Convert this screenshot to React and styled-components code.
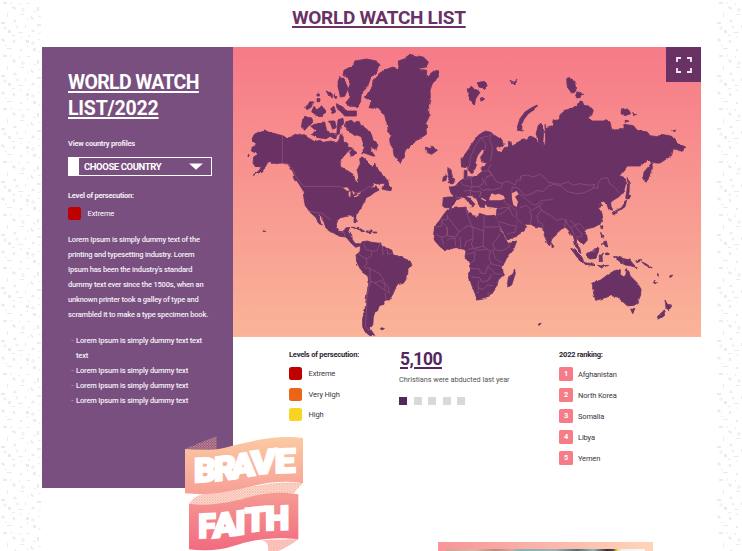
import React from "react";
import styled, { createGlobalStyle } from "styled-components";

const Global = createGlobalStyle`
  *, *::before, *::after { box-sizing: border-box; }
  body { margin: 0; background: #fff; overflow: hidden; }
  h1, h2, h3, p, ul, ol { margin: 0; padding: 0; list-style: none; }
`;

const Page = styled.div`
  position: relative;
  display: grid;
  grid-template-columns: 42px 674px 26px;
  width: 742px;
  height: 551px;
  overflow: hidden;
  font-family: Roboto, "Liberation Sans", sans-serif;
  color: #3b3540;
`;
const Texture = styled.svg`
  display: block;
  width: 100%;
  height: 551px;
`;
const Content = styled.main`
  display: flex;
  flex-direction: column;
`;
const PageTitle = styled.h1`
  width: 674px;
  height: 47px;
  padding: 6px 0 0 250px;
  font-size: 19px;
  line-height: 24px;
  font-weight: 700;
  letter-spacing: -0.3px;
  white-space: nowrap;
  color: #6a3165;
  text-decoration: underline;
  text-decoration-thickness: 1.5px;
  text-underline-offset: 2px;
`;
const WatchList = styled.section`
  display: grid;
  grid-template-columns: 191px 468px;
  height: 441px;
`;
const Sidebar = styled.aside`
  padding: 23px 0 0 26px;
  background: #784f7f;
  color: #fff;
`;
const SideTitle = styled.h2`
  font-size: 19.5px;
  line-height: 26px;
  font-weight: 700;
  letter-spacing: -0.65px;
  white-space: nowrap;
  text-decoration: underline;
  text-decoration-thickness: 2px;
  text-underline-offset: 2px;
  & > span { letter-spacing: -0.2px; }
`;
const Label = styled.h3`
  margin-top: ${(p) => p.$top || 0}px;
  font-size: 7.5px;
  line-height: 10px;
  font-weight: 700;
  letter-spacing: ${(p) => p.$track || -0.22}px;
  white-space: nowrap;
  color: ${(p) => p.$color || "#f4edf5"};
`;
const Select = styled.button`
  display: flex;
  align-items: center;
  justify-content: space-between;
  width: 144px;
  height: 19px;
  margin-top: 8px;
  padding: 0 8px 0 5px;
  border: 1px solid #fff;
  border-left: 11px solid #fff;
  background: transparent;
  color: #fff;
  font: 700 9.5px/16px Roboto, sans-serif;
  letter-spacing: -0.4px;
  white-space: nowrap;
`;
const Caret = styled.svg`
  width: 14px;
  height: 7px;
`;
const LevelRow = styled.li`
  display: flex;
  align-items: center;
  gap: 6.5px;
  height: 13px;
  margin-top: ${(p) => p.$top || 0}px;
  font-size: 7.5px;
  line-height: 11px;
  letter-spacing: -0.1px;
`;
const Swatch = styled.span`
  width: 13px;
  height: 13px;
  border-radius: 2.5px;
  background: ${(p) => p.$color};
`;
const Copy = styled.p`
  margin-top: 12px;
  font-size: 7.5px;
  line-height: 15px;
  font-weight: 500;
  letter-spacing: -0.18px;
  white-space: nowrap;
  color: #f6eff7;
`;
const Bullets = styled.ul`
  margin-top: 11px;
`;
const Bullet = styled.li`
  display: grid;
  grid-template-columns: 5px 140px;
  margin-left: 3px;
  font-size: 7.5px;
  line-height: 15px;
  font-weight: 500;
  letter-spacing: -0.17px;
  color: #f6eff7;
  &::before { content: "-"; color: #f67c88; }
`;
const Main = styled.div`
  display: flex;
  flex-direction: column;
`;
const MapPanel = styled.div`
  position: relative;
  height: 290px;
  background: linear-gradient(#f67a88, #fab498);
`;
const WorldMap = styled.svg`
  display: block;
  width: 468px;
  height: 290px;
`;
const Expand = styled.button`
  position: absolute;
  top: 0;
  right: 0;
  display: grid;
  place-items: center;
  width: 35px;
  height: 35px;
  padding: 1px 0 0 1px;
  border: 0;
  background: #6a3165;
`;
const Facts = styled.div`
  display: grid;
  grid-template-columns: 110px 160px 100px;
  padding: 13px 0 0 56px;
`;
const Stat = styled.div`
  font-size: 7.3px;
`;
const StatNumber = styled.div`
  height: 24px;
  font-size: 17.5px;
  line-height: 19px;
  font-weight: 700;
  letter-spacing: -0.5px;
  padding-left: 1px;
  color: #53275e;
  text-decoration: underline;
  text-decoration-thickness: 1.5px;
  text-underline-offset: 2px;
`;
const StatText = styled.p`
  line-height: 12px;
  white-space: nowrap;
  letter-spacing: -0.03px;
  color: #555;
`;
const Pager = styled.div`
  display: flex;
  gap: 6.5px;
  margin-top: 11px;
`;
const Dot = styled.span`
  width: 8px;
  height: 8px;
  background: ${(p) => (p.$active ? "#53275e" : "#d9d9d9")};
`;
const RankRow = styled.li`
  display: flex;
  align-items: center;
  gap: 5px;
  height: 14px;
  margin-bottom: 7px;
  font-size: 7.5px;
  letter-spacing: -0.15px;
`;
const Rank = styled.span`
  width: 14px;
  height: 14px;
  border-radius: 1.5px;
  background: #f67c88;
  color: #fff;
  font-size: 7.5px;
  line-height: 13px;
  font-weight: 700;
  text-align: center;
`;
const RankList = styled.ol`
  margin-top: 7px;
`;
const Feature = styled.article`
  width: 215px;
  height: 60px;
  margin: 54px 0 0 396px;
  padding: 7px 8px;
  background: linear-gradient(90deg, #f8949a, #ffd5ba);
`;
const FeaturePhoto = styled.div`
  height: 53px;
  background: linear-gradient(90deg, #c9a596 0, #d8b8a5 14%, #b58c80 25%, #d3aaa0 33%, #80b5b8 36%, #94b5b4 55%, #526c74 66%, #91b6b5 74%, #332a31 81%, #544847 84%, #e5da55 86%, #e9f4f2 88%, #f9f9f9 100%);
`;
const Badge = styled.svg`
  position: absolute;
  left: 185px;
  top: 435px;
  width: 120px;
  height: 116px;
`;

const land = [
  // North and Central America
  "M64 262L82 253 95 249 108 256 122 259 148 266 165 273 180 266 185 262 196 264 200 260 205 267 215 266 230 275 245 284 262 280 270 286 280 284 295 282 312 290 318 278 322 262 330 268 332 285 345 290 344 300 358 303 346 312 330 330 318 348 325 362 345 372 360 382 366 400 372 405 377 390 372 370 382 350 380 335 388 330 400 340 412 352 418 361 428 348 436 370 450 382 461 398 460 408 440 410 425 411 412 424 428 420 440 428 425 436 412 446 399 452 396 461 389 469 386 478 383 489 369 502 368 510 373 525 368 528 361 514 358 506 336 509 322 512 314 520 309 535 318 552 332 554 338 543 350 541 346 556 356 562 358 578 367 590 380 590 383 596 368 601 354 588 339 570 320 568 298 556 279 543 273 526 264 510 252 498 262 523 268 534 258 530 249 512 240 503 226 492 217 474 213 455 210 430 200 414 188 395 178 370 165 352 148 348 125 350 112 344 105 345 95 362 82 375 62 386 80 368 85 360 70 358 60 350 62 330 75 322 55 312 58 300 72 295 55 280Z",
  // Arctic archipelago
  "M333 70L362 55 368 42 400 36 430 42 438 55 430 75 412 95 405 115 390 130 385 160 375 178 350 178 338 168 352 150 345 130 352 105 345 95 330 85Z",
  "M322 88L335 100 345 125 335 148 322 150 318 130 312 110Z",
  "M280 132L298 142 298 153 288 148ZM305 140L312 150 308 156ZM252 141h7v6h-7ZM252 155h9v6h-9ZM218 182L228 165 240 164 235 180 222 188ZM236 195L243 178 253 190 266 176 278 195 262 208 245 200ZM290 185L303 178 308 195 298 200ZM310 170L330 180 340 192 370 192 370 207 335 207 325 195 312 185Z",
  "M210 212L235 212 240 222 228 235 215 250 205 240ZM230 235L255 230 275 228 280 245 295 265 280 275 255 272 237 263 248 250ZM290 222L305 222 310 240 300 250ZM315 218L330 214 332 230 322 240 319 260 311 265ZM293 258l15 2 -2 15 -10 -4Z",
  "M338 225L355 220 365 228 378 222 383 235 400 245 415 262 420 280 435 293 430 310 412 298 417 315 428 330 405 322 388 316 395 300 382 275 360 262 345 250 338 240ZM350 315L360 305 370 322 355 328Z",
  "M455 410l9 -12 3 18 6 5 -2 10 -21 -5ZM180 388l5 12 5 2 -4 -13ZM45 323h3v4h-3Z",
  // Greenland
  "M480 60L465 65 440 78 420 100 418 118 397 150 415 165 408 182 440 186 455 205 463 235 466 253 476 265 470 275 472 290 480 305 483 325 501 350 508 335 518 308 546 285 580 262 584 240 577 232 588 210 587 180 592 150 591 130 598 110 616 90 616 75 601 73 580 91 581 70 551 65 581 60 586 45 571 30 526 22 516 35 496 42 498 60 491 70 481 60Z",
  // Atlantic and polar islands
  "M576 300L588 305 595 298 605 301 613 310 596 322 581 316ZM703 125L716 118 726 130 741 136 728 155 724 173 714 160 706 145ZM731 108L751 103 763 115 754 125 738 120ZM741 150L752 155 744 163ZM831 100L841 105 852 97 841 113Z",
  "M913 174L911 182 886 200 874 215 864 235 871 252 856 250 853 240 861 215 876 195 896 182ZM916 235L924 229 932 250 929 296 917 285 909 262Z",
  "M644 362L654 368 656 380 666 400 661 410 645 410 651 395 646 385ZM631 390L641 385 639 400 629 403Z",
  // Europe and Asia
  "M684 335L686 358 696 362 703 358 708 375 718 380 724 370 730 355 726 345 734 325 746 308 754 305 752 318 743 330 746 345 764 347 761 354 748 356 748 373 733 385 716 390 702 388 702 370 694 370 693 395 681 402 666 418 649 421 653 436 661 449 661 450 646 450 631 452 629 477 636 482 652 482 664 470 671 460 684 453 693 450 709 469 722 478 716 480 726 472 718 463 702 446 717 446 731 459 741 480 752 482 757 470 764 478 792 482 791 496 789 509 797 530 812 557 822 578 846 570 866 556 881 539 868 526 853 529 842 509 846 522 860 530 878 532 896 532 906 539 921 540 929 543 932 560 940 580 948 596 953 592 955 579 966 564 988 544 996 540 1004 546 1012 564 1021 566 1025 582 1028 600 1038 616 1044 619 1040 604 1030 590 1031 574 1041 585 1052 592 1063 579 1061 565 1051 553 1057 546 1068 544 1082 541 1099 532 1109 514 1106 498 1096 483 1110 476 1097 473 1110 462 1121 469 1127 487 1135 490 1133 466 1142 459 1158 449 1170 436 1178 412 1178 397 1171 390 1159 386 1171 372 1183 357 1221 357 1230 350 1243 338 1252 345 1246 360 1233 375 1231 390 1239 406 1256 380 1258 360 1256 345 1266 348 1281 348 1301 335 1316 325 1321 305 1333 308 1349 316 1358 300 1346 295 1331 285 1316 268 1286 262 1279 270 1251 266 1243 255 1213 250 1201 236 1173 232 1169 245 1149 245 1136 248 1131 225 1119 218 1111 222 1079 222 1064 212 1076 205 1081 190 1071 178 1053 175 1046 160 1039 165 1031 180 1001 188 981 203 979 215 961 218 957 238 939 245 936 232 938 280 931 296 912 284 904 272 888 266 884 278 866 280 856 285 836 295 834 283 826 285 828 300 814 302 808 312 794 315 786 298 801 300 812 294 806 280 786 268 774 256 756 252 736 265 721 285 708 305 696 322Z",
  // Africa
  "M643 489L661 484 699 480 703 494 721 506 736 509 739 499 761 506 786 506 793 524 806 554 821 582 826 589 851 582 841 609 821 634 808 659 811 684 796 699 791 719 781 734 771 749 751 756 733 759 726 739 716 714 706 684 713 669 709 649 696 629 699 614 691 602 666 602 636 609 621 599 606 582 601 569 606 539 621 519 631 504Z",
  "M845 669L847 679 836 714 826 720 823 709 827 689 839 682Z",
  // South America
  "M383 594L391 584 403 582 416 586 441 589 449 599 476 609 481 624 501 629 531 642 537 654 526 669 521 694 511 709 491 714 481 739 469 759 456 759 456 772 439 776 433 792 426 794 421 814 419 834 411 844 424 864 411 866 396 854 389 839 389 814 396 789 401 744 408 704 403 686 386 674 371 644 369 624 381 614ZM442 844l9 -2 3 3 -8 4Z",
  "M355 541l20 0 20 12 -8 1 -14 -8ZM399 552l18 0 0 5 -16 -1ZM421 555h7v3h-7Z",
  // Asian islands and Oceania
  "M1183 392L1189 410 1188 437 1183 430ZM1183 424L1188 444 1194 447 1184 456 1178 454ZM1181 459L1176 479 1163 489 1149 496 1141 504 1138 496 1153 489 1166 482 1174 464ZM956 589L963 599 957 602ZM1103 535h6v10l-6 -4ZM1103 556L1111 569 1106 576ZM1112 584l8 -2 4 18 -10 -3ZM1106 590h6v4h-6Z",
  "M1013 604L1026 609 1046 629 1053 646 1041 642 1029 626ZM1051 646L1076 650 1086 656 1056 652ZM1061 619L1076 614 1091 599 1098 604 1089 634 1071 636 1061 629ZM1099 624L1113 622 1103 629 1109 642 1103 639 1099 645ZM1094 655l14 2 16 -2 -18 8ZM1118 618h10v5h-10Z",
  "M1141 629L1153 629 1166 634 1191 639 1203 654 1213 662 1191 656 1176 654 1161 644ZM1208 642l15 -5 -4 8ZM1226 645l10 4 22 14 -3 1 -20 -11ZM1264 700l9 6 -2 2 -8 -5ZM1311 686l8 -2 -3 5 -6 2ZM1274 679l3 8 -3 -1Z",
  "M1079 709L1103 699 1123 684 1136 676 1153 669 1163 672 1161 682 1173 690 1179 682 1181 664 1189 676 1194 689 1211 706 1224 726 1223 744 1213 769 1201 776 1181 772 1171 762 1163 759 1153 749 1136 746 1116 752 1103 756 1088 760 1083 744 1079 724ZM1193 786L1206 788 1199 800ZM1296 759L1303 772 1316 774 1306 789 1299 782ZM1298 789L1291 806 1276 816 1273 809 1289 794ZM915 829h6v5h-6ZM94 549h3v3h-3Z",
  // Severnaya Zemlya and eastern Arctic islands
  "M1001 95L1013 90 1026 110 1029 135 1016 138 1003 120ZM1029 152L1036 132 1049 142 1041 152ZM1166 188L1186 186 1193 200 1176 206 1164 200ZM1199 197L1211 202 1204 206ZM1176 220L1188 222 1178 226ZM1316 250L1328 246 1326 254Z",
];
const water = [
  "M769 454L776 439 787 443 797 440 812 446 816 456 801 460 781 460 769 460Z",
  "M836 439L851 432 857 442 846 449 855 464 851 480 841 474 837 456Z",
  "M330 422L343 421 350 430 342 432ZM347 434L353 433 352 450 347 448ZM357 430L366 438 361 444ZM362 448l14 -5 1 3 -12 5ZM371 440l12 -4 -1 4 -10 3Z",
  "M363 270l8 -5 13 5 6 20 -8 18 -20 2 5 -20ZM746 452l14 8 -3 3 -13 -8Z",
];
const borders =
  "M148 266V348M148 348L165 350 178 365 190 390 212 418H320L333 424M365 438L385 434 403 422 412 418 420 422M226 492L248 497 267 498 280 510 293 518M322 556L332 555 336 568M350 565L356 563M701 372L711 352 712 330 728 295 744 272 766 268 776 260M756 310L758 290 744 272M776 262L770 278 778 300 776 330 770 344M776 350L765 365 778 384 790 404 808 410 806 422 780 428 764 430M681 405L693 415 715 420 711 445M695 398L714 390 717 420 736 418 752 410 748 392M752 375L763 370 778 384 760 390M736 418L750 430 770 425M711 430L730 435 742 432 743 448M692 432L711 430M668 450L680 452M765 386L755 400 760 415M745 435L738 450M804 410L822 402 846 414 852 400 864 398 862 388 884 384 900 390 920 382 932 388 946 406 968 410 985 412 1005 404 1020 415 1040 410 1070 415 1085 412 1080 422 1094 424 1095 408 1105 395 1124 392 1130 410 1148 424 1158 438M836 436L838 420 856 424 870 440 880 446 900 438 915 430 930 434 945 418 963 412 985 418 1004 434 1030 440 1052 438 1080 424M856 440L870 448 895 470 910 475 925 460 960 458M860 482L880 475 896 490 920 476 930 465M838 480L852 495 850 512 868 530M890 490L896 508 892 530M920 476L925 490 912 505 916 525 928 530 930 548M925 490L952 505 972 520 985 515 998 520 995 540M998 515L1006 536 1014 542 1025 565M1016 540L1026 535 1038 553 1048 560 1046 570 1030 568M1025 533L1040 530 1055 548M1010 520L1025 530M793 486L812 482 829 482 836 500 845 510M790 502L806 500 829 482M812 458L820 472 835 478M797 524L813 528 836 536 850 536 846 556 822 560M643 503L643 518 626 518 626 538 606 540M643 508L678 554 704 536 718 540 752 552V542M699 480L703 505 718 540M753 508V540H804M678 554L668 570 643 566 641 540 626 522M643 540V566L625 570 610 563M625 570L632 592M643 580L650 574 668 574M665 574L668 596M680 570L684 602M694 600L700 582 720 576 720 540M720 576L715 592 722 604 750 598 752 552M704 608L722 604 740 610 760 606 772 612 786 606 778 590 792 575 800 562M750 598L762 606M786 606L796 612 815 608 830 598 826 589M700 622L720 618 728 610M710 650L724 640 726 614M712 664L740 666 742 678 757 680 763 660 774 650 768 630 772 612M780 612L786 634 807 648M774 650L808 659M763 660L778 668 785 680 809 682M715 690L740 692 745 704 762 702 778 690M736 700V738L728 738M736 722L750 728 763 714 780 716M763 702L776 680M767 736l6 6 -6 4 -3 -6ZM392 590L400 608 416 612 416 626 400 636 402 650 390 662M441 589L436 602 430 612 416 612M449 599L450 624M462 605L464 622 480 618M400 636L374 620M395 662L410 664 440 680 450 695 456 710 465 718 470 740M410 664L412 702 402 745 400 800 397 838 410 854M412 702L425 708 444 700 456 714 456 730 467 738M425 708L456 730M412 706L416 704M456 738L460 758M1074 614L1090 612M1170 637V652";

const specks = [
  "M3 2h4v2h-4z", "M13 6l3 2-1 2-3-2z", "M27 3h3v1h-3z", "M37 7h2v4h-2z", "M7 13h1v4h-1z",
  "M20 14h4v1h-4z", "M31 16l3 3-2 1-2-3z", "M1 22h4v2h-4z", "M13 22l2-3 2 3z",
  "M25 25h1v3h-1z", "M37 24h4v2h-4z", "M8 30h3v3h-3z", "M18 32h5v1h-5z", "M31 32l2-3 2 3z",
  "M2 38l3 2-1 2-3-2z", "M13 40h2v3h-2z", "M26 40h3v3h-3z", "M38 39h2v1h-2z",
  "M7 48h5v1h-5z", "M20 49h2v2h-2z", "M33 48h3v3h-3z", "M39 51l2 1-1 1-2-1z",
  "M19 3h1v2h-1z", "M38 16h3v1h-3z", "M12 35h3v1h-3z", "M28 36h2v1h-2z", "M27 45h1v2h-1z",
];

function TextureStrip({ id }) {
  return (
    <Texture aria-hidden="true">
      <defs>
        <pattern id={id} width="42" height="53" patternUnits="userSpaceOnUse">
          <path d={specks.join("")} fill="#ebebec" />
          <g fill="none" stroke="#eaeaeb" strokeWidth="0.9">
            <circle cx="23" cy="10" r="1.3" />
            <circle cx="5" cy="28" r="1.2" />
            <circle cx="33" cy="43" r="1.3" />
            <circle cx="17" cy="27" r="1" />
            <path d="M10 4l2-2M33 11l3 1M27 20l2-2M41 32l-3 2M22 38l-2-2M5 45l2 1" />
          </g>
        </pattern>
      </defs>
      <rect width="100%" height="100%" fill={`url(#${id})`} />
    </Texture>
  );
}

function World() {
  return (
    <WorldMap viewBox="0 0 1404 870" role="img" aria-label="World map">
      <defs>
        <linearGradient id="sea" gradientUnits="userSpaceOnUse" x1="0" y1="0" x2="0" y2="870">
          <stop stopColor="#f67a88" /><stop offset="1" stopColor="#fab498" />
        </linearGradient>
        <filter id="coast" x="0" y="0" width="1404" height="870" filterUnits="userSpaceOnUse" colorInterpolationFilters="sRGB">
          <feTurbulence type="fractalNoise" baseFrequency="0.05" numOctaves="2" seed="4" />
          <feDisplacementMap in="SourceGraphic" scale="9" xChannelSelector="R" yChannelSelector="G" />
        </filter>
      </defs>
      <g fill="#6a3165" stroke="#6a3165" strokeWidth="2.5" strokeLinejoin="round" filter="url(#coast)">
        {land.map((d, i) => <path key={i} d={d} />)}
      </g>
      {water.map((d, i) => <path key={i} d={d} fill="url(#sea)" />)}
      <path d={borders} fill="none" stroke="#98557c" strokeWidth="2" strokeLinejoin="round" />
    </WorldMap>
  );
}

// Each letter of the ribbon is fitted to its own slanted slot.
const braveLetters = [
  ["B", 72, 66, 187, -3], ["R", 132, 66, 184, -7], ["A", 183, 72, 177, -9], ["V", 242, 76, 166, -7], ["E", 314, 62, 159, -2],
];
const faithLetters = [
  ["F", 85, 52, 354, -2], ["A", 128, 73, 354, -7], ["I", 196, 31, 346, -8], ["T", 225, 64, 337, -6], ["H", 286, 72, 331, -2],
];

function RibbonLetter({ glyph, x, width, y, slant }) {
  return (
    <text
      fontSize="100"
      textLength={width}
      lengthAdjust="spacingAndGlyphs"
      transform={`translate(${x} ${y}) skewY(${slant})`}
    >
      {glyph}
    </text>
  );
}

function BraveFaith() {
  return (
    <Badge viewBox="45 45 360 348" role="img" aria-label="Brave Faith">
      <defs>
        <linearGradient id="peach" x1="0" y1="0" x2="0" y2="1">
          <stop stopColor="#fbcaa2" /><stop offset="1" stopColor="#f79f96" />
        </linearGradient>
        <linearGradient id="rose" x1="0" y1="0" x2="0" y2="1">
          <stop stopColor="#f59b93" /><stop offset="1" stopColor="#f36a80" />
        </linearGradient>
        <pattern id="mesh" width="8" height="8" patternUnits="userSpaceOnUse">
          <path d="M0 0l8 8M8 0l-8 8" stroke="#f7a594" strokeWidth="1.7" />
        </pattern>
      </defs>
      <path d="M46 86L140 48V92Z" fill="url(#mesh)" />
      <path d="M58 250C75 224 100 217 145 218C220 209 300 180 398 189L370 221C290 215 210 240 140 253C100 257 75 257 58 255Z" fill="#fde3da" />
      <path d="M58 250C75 224 100 217 145 218C220 209 300 180 398 189L370 221C290 215 210 240 140 253C100 257 75 257 58 255Z" fill="url(#mesh)" />
      <path d="M45 87C85 89 125 93 165 83C235 66 315 43 399 54V190C330 179 280 190 220 205C150 222 100 225 45 220Z" fill="url(#peach)" />
      <path d="M275 360C295 365 295 378 295 393H325C350 383 370 370 385 358Z" fill="#fbd1d1" />
      <path d="M275 360C295 365 295 378 295 393H325C350 383 370 370 385 358Z" fill="url(#mesh)" />
      <path d="M57 251C120 261 190 244 250 228C300 216 345 216 385 223V358C300 348 240 362 190 378C150 392 100 393 57 388Z" fill="url(#rose)" />
      <g fill="#fff" stroke="#fff" strokeWidth="6.5" fontFamily="Roboto, sans-serif" fontWeight="900">
        {[...braveLetters, ...faithLetters].map(([glyph, x, width, y, slant]) => (
          <RibbonLetter key={`${glyph}${x}`} glyph={glyph} x={x} width={width} y={y} slant={slant} />
        ))}
      </g>
    </Badge>
  );
}

const levels = [["Extreme", "#c00000"], ["Very High", "#ea6516"], ["High", "#f9d423"]];
const ranking = ["Afghanistan", "North Korea", "Somalia", "Libya", "Yemen"];

export default function App() {
  return (
    <>
      <Global />
      <Page>
        <TextureStrip id="leftTexture" />
        <Content>
          <PageTitle>WORLD WATCH LIST</PageTitle>
          <WatchList>
            <Sidebar>
              <SideTitle>WORLD WATCH<br /><span>LIST/2022</span></SideTitle>
              <Label $top={17}>View country profiles</Label>
              <Select>
                CHOOSE COUNTRY
                <Caret viewBox="0 0 14 7"><path d="M0 .5H14L7 6.8Z" fill="#fff" /></Caret>
              </Select>
              <Label $top={15}>Level of persecution:</Label>
              <ul><LevelRow $top={6}><Swatch $color="#c00000" />Extreme</LevelRow></ul>
              <Copy>
                Lorem Ipsum is simply dummy text of the<br />
                printing and typesetting industry. Lorem<br />
                Ipsum has been the industry's standard<br />
                dummy text ever since the 1500s, when an<br />
                unknown printer took a galley of type and<br />
                scrambled it to make a type specimen book.
              </Copy>
              <Bullets>
                <Bullet><span>Lorem Ipsum is simply dummy text text<br />text</span></Bullet>
                {[1, 2, 3].map((n) => <Bullet key={n}>Lorem Ipsum is simply dummy text</Bullet>)}
              </Bullets>
            </Sidebar>
            <Main>
              <MapPanel>
                <World />
                <Expand aria-label="Full screen">
                  <svg width="16" height="16" viewBox="0 0 16 16" fill="none" stroke="#f2eaf2" strokeWidth="1.8">
                    <path d="M1 5V1H5M11 1H15V5M15 11V15H11M5 15H1V11" />
                  </svg>
                </Expand>
              </MapPanel>
              <Facts>
                <div>
                  <Label $color="#2b2630" $track={-0.2}>Levels of persecution:</Label>
                  <ul>
                    {levels.map(([name, color], i) => (
                      <LevelRow key={name} $top={i ? 7.5 : 7}><Swatch $color={color} />{name}</LevelRow>
                    ))}
                  </ul>
                </div>
                <Stat>
                  <StatNumber>5,100</StatNumber>
                  <StatText>Christians were abducted last year</StatText>
                  <Pager>{[0, 1, 2, 3, 4].map((n) => <Dot key={n} $active={n === 0} />)}</Pager>
                </Stat>
                <div>
                  <Label $color="#2b2630">2022 ranking:</Label>
                  <RankList>
                    {ranking.map((name, i) => <RankRow key={name}><Rank>{i + 1}</Rank>{name}</RankRow>)}
                  </RankList>
                </div>
              </Facts>
            </Main>
          </WatchList>
          <Feature><FeaturePhoto /></Feature>
        </Content>
        <TextureStrip id="rightTexture" />
        <BraveFaith />
      </Page>
    </>
  );
}
